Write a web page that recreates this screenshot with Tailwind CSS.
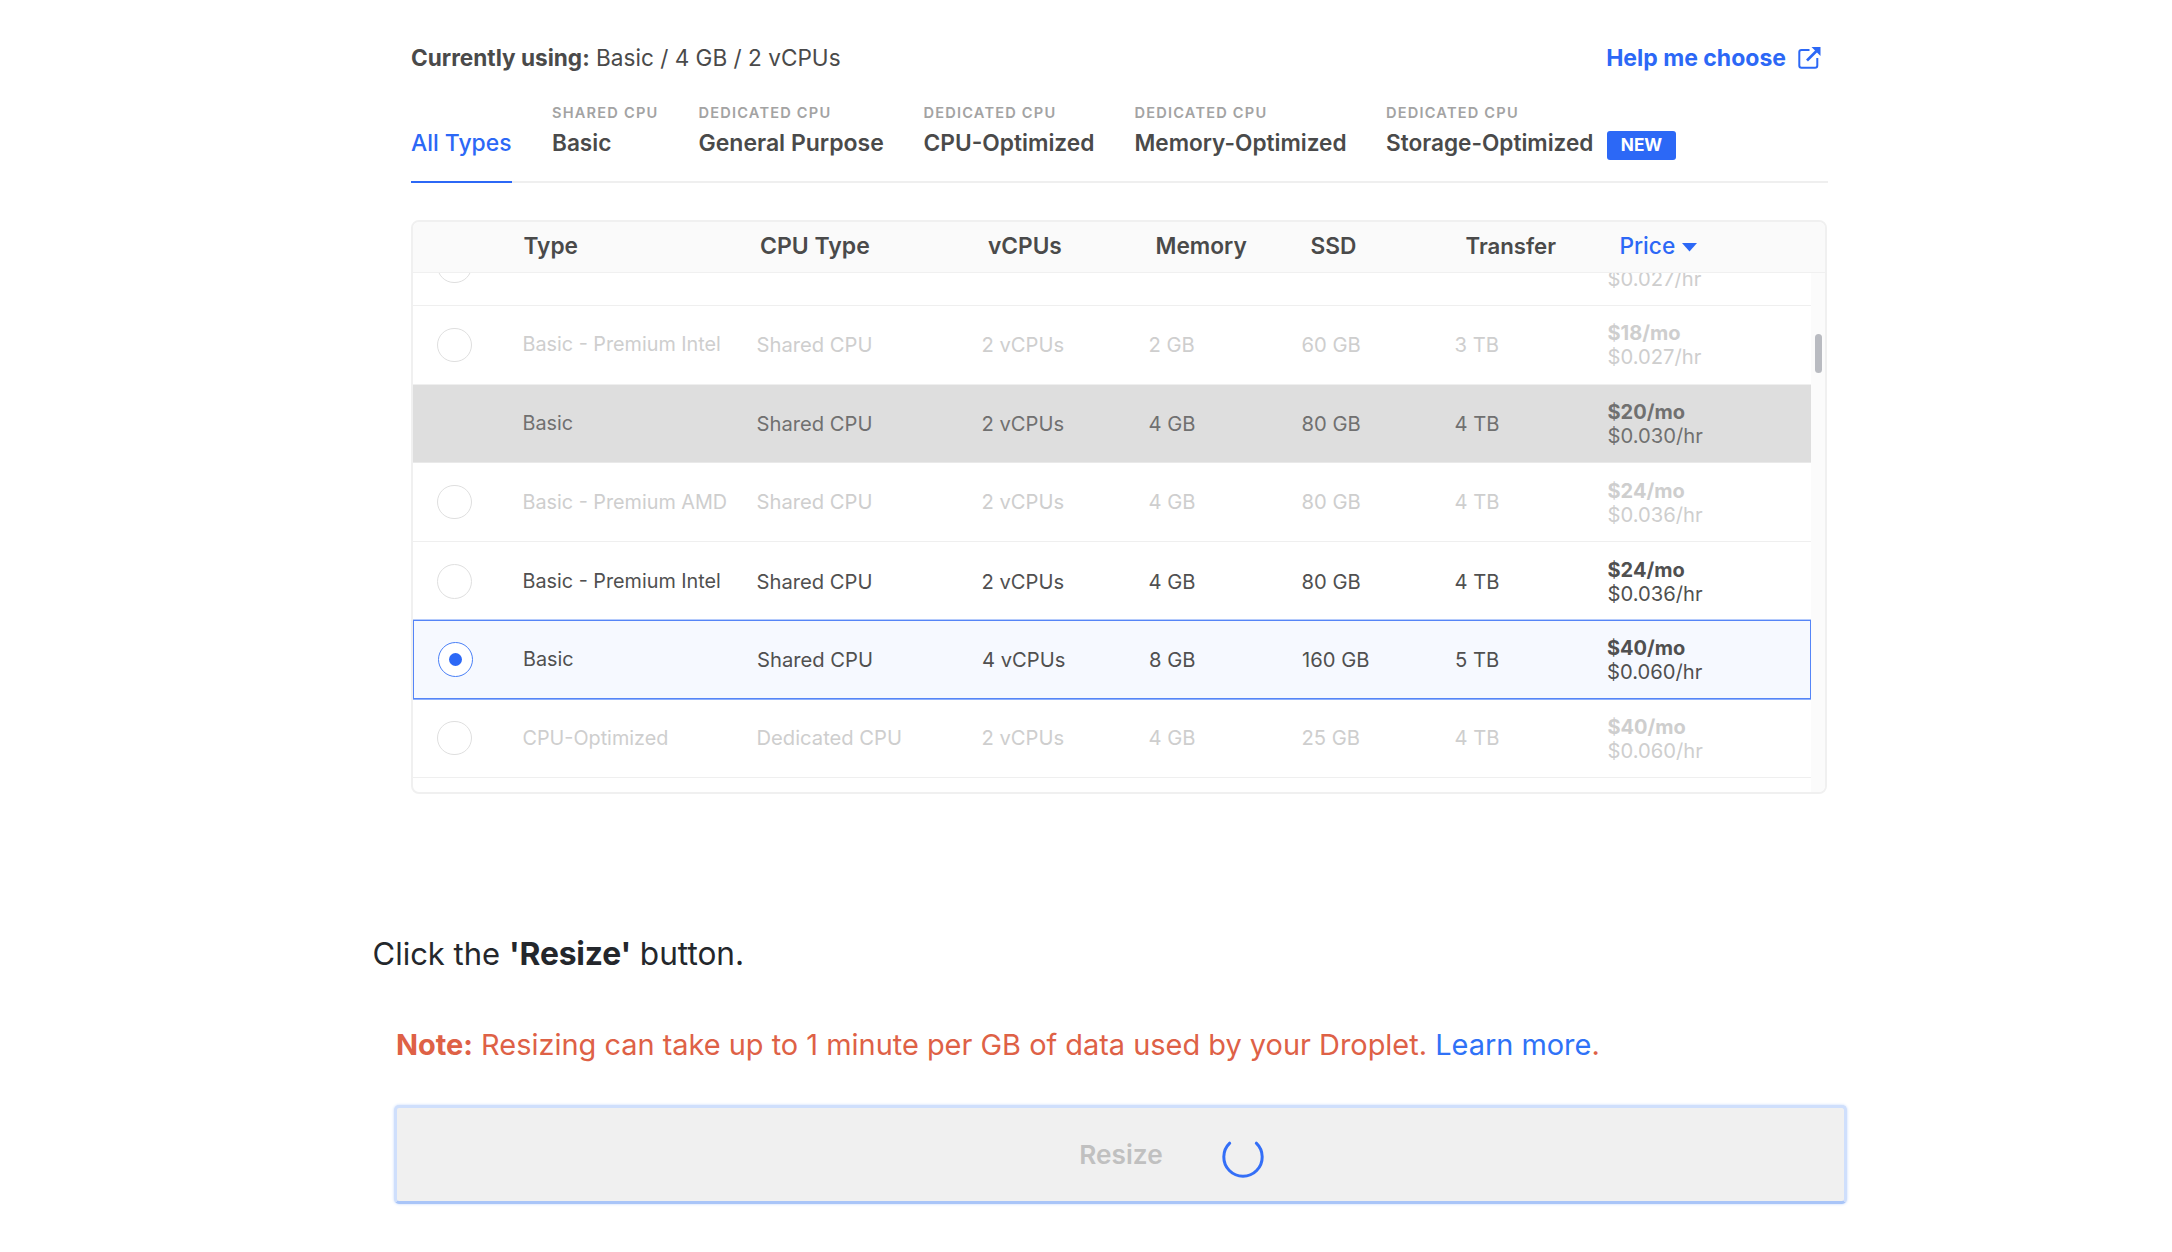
<!DOCTYPE html>
<html lang="en">
<head>
<meta charset="utf-8">
<title>Resize Droplet</title>
<script src="https://cdn.jsdelivr.net/npm/@tailwindcss/browser@4"></script>
</head>
<body class="bg-white font-['Inter',sans-serif] text-[#4a4a4a] w-[2172px] h-[1252px] overflow-hidden">
<section class="ml-[411px] w-[1417px] pt-[42px]">
  <div class="flex h-8 items-center justify-between whitespace-nowrap leading-8">
    <p class="text-[22.600px]"><b class="text-[22.600px] font-bold">Currently using:</b> Basic / 4 GB / 2 vCPUs</p>
    <a class="flex items-center pr-[7px] text-[23px] font-bold text-[#2c68f6]">Help me choose
      <svg class="-mt-px ml-3 size-[23px]" viewBox="0 0 23 23" fill="none" stroke="#2c68f6" stroke-width="2"><path d="M11.5 4H3.500Q1.300 4 1.300 6V19.500Q1.300 21.700 3.500 21.700H17Q19.300 21.700 19.300 19.500V12" /><path d="M9 14.500 18.500 5" stroke-width="2.700"/><path d="M13.500 1H22.500V10Z" fill="#2c68f6" stroke="none"/></svg>
    </a>
  </div>
  <nav class="flex h-[109px] whitespace-nowrap border-b-2 border-[#efefef] pt-[29px] text-[22.600px] font-semibold leading-[30px]">
    <div class="w-[141px]"><div class="-mb-[2px] h-[80px] w-[101px] border-b-2 border-[#2c68f6] pt-[25px] text-[22.900px] font-medium text-[#2c68f6]">All Types</div></div>
    <div class="w-[146.500px]"><div class="mb-[5px] h-5 text-[14.600px] leading-5 tracking-[1.200px] text-[#a3a3a3]">SHARED CPU</div>Basic</div>
    <div class="w-[225px]"><div class="mb-[5px] h-5 text-[14.600px] leading-5 tracking-[1.200px] text-[#a3a3a3]">DEDICATED CPU</div><span class="text-[23px]">General Purpose</span></div>
    <div class="w-[211px]"><div class="mb-[5px] h-5 text-[14.600px] leading-5 tracking-[1.200px] text-[#a3a3a3]">DEDICATED CPU</div><span class="text-[22.750px]">CPU-Optimized</span></div>
    <div class="w-[251.500px]"><div class="mb-[5px] h-5 text-[14.600px] leading-5 tracking-[1.200px] text-[#a3a3a3]">DEDICATED CPU</div>Memory-Optimized</div>
    <div class="w-[221px]"><div class="mb-[5px] h-5 text-[14.600px] leading-5 tracking-[1.200px] text-[#a3a3a3]">DEDICATED CPU</div>Storage-Optimized</div>
    <span class="mt-[28px] h-[29px] w-[69px] rounded-[3px] bg-[#2c68f6] text-center text-[17.200px] font-bold leading-[27px] text-white">NEW</span>
  </nav>

  <div class="mt-[37px] h-[574px] w-[1416px] overflow-hidden rounded-[8px] border-2 border-[#f0f0f0]">
    <div class="grid h-[51px] grid-cols-[110.500px_236.500px_228px_167.500px_155px_155px_154px_auto] items-center whitespace-nowrap border-b border-[#f0f0f0] bg-[#fafafa] pb-[1.500px] text-[22.700px] font-semibold">
      <span></span><span>Type</span><span class="text-[23px]">CPU Type</span><span>vCPUs</span><span>Memory</span><span>SSD</span><span class="-mt-px text-[22.200px]">Transfer</span>
      <span class="flex items-center text-[#2c68f6] font-medium">Price<svg class="ml-[7px] mt-[3px] h-[9px] w-[15px]" viewBox="0 0 15 9"><path d="M0 0H15L7.500 8.500Z" fill="#2c68f6"/></svg></span>
    </div>
    <div class="flex h-[519px] overflow-hidden">
      <div id="rows" class="-mt-[45.670px] w-[1398px] text-[20.200px]"></div>
      <div class="relative flex-1 bg-[#fbfbfb]"><div class="absolute left-[4px] top-[61px] h-[39px] w-[7px] rounded-full bg-[#b9bbc1]"></div></div>
    </div>
  </div>
</section>

<p class="ml-[372.500px] mt-[142px] h-9 whitespace-nowrap text-[31.200px] leading-9 text-[#24272c]"><span class="text-[31px]">Click the</span> <b class="text-[31.800px] tracking-[-0.150px]">'Resize'</b> <span class="text-[31.600px]">button.</span></p>
<p class="ml-[396px] mt-[53px] h-10 whitespace-nowrap text-[28.930px] leading-10 text-[#de6146]"><b>Note:</b> Resizing can take up to 1 minute per GB of data used by your Droplet. <a class="text-[#2f72f7]">Learn more</a>.</p>
<button class="relative ml-[394px] mt-[40px] block h-[99px] w-[1453px] rounded-[5px] border-[3px] border-[#cfdffc] border-b-[#a9c5f8] bg-[#f0f0f0] text-[26.200px] font-semibold text-[#c0c0c0] shadow-[0_0_3px_#c4d8fb]">
  <span class="block pl-px">Resize</span>
  <svg class="absolute left-[823.500px] top-[25.500px] size-[44px]" viewBox="0 0 44 44" fill="none"><path d="M8.700 9.200A19.200 19.200 0 1 0 35.300 9.200" stroke="#346ff7" stroke-width="3" stroke-linecap="round"/></svg>
</button>

<script>
const plans = [
  ['', '', '', '', '', '', '', '$0.027', 'off'],
  ['Basic - Premium Intel', 'Shared CPU', '2 vCPUs', '2 GB', '60 GB', '3 TB', '$18', '$0.027', 'off'],
  ['Basic', 'Shared CPU', '2 vCPUs', '4 GB', '80 GB', '4 TB', '$20', '$0.030', 'current'],
  ['Basic - Premium AMD', 'Shared CPU', '2 vCPUs', '4 GB', '80 GB', '4 TB', '$24', '$0.036', 'off'],
  ['Basic - Premium Intel', 'Shared CPU', '2 vCPUs', '4 GB', '80 GB', '4 TB', '$24', '$0.036', 'on'],
  ['Basic', 'Shared CPU', '4 vCPUs', '8 GB', '160 GB', '5 TB', '$40', '$0.060', 'selected'],
  ['CPU-Optimized', 'Dedicated CPU', '2 vCPUs', '4 GB', '25 GB', '4 TB', '$40', '$0.060', 'off'],
  ['', '', '', '', '', '', '', '', 'blank'],
];
const tone = {
  off: 'border-b border-[#efefef] text-[#cecece]',
  current: 'border-b border-[#e9e9e9] bg-[#dedede] text-[#707070]',
  on: 'text-[#505050]',
  selected: '-mt-px border border-[#5585f7] bg-[#f6f9ff] text-[#505050] shadow-[0_-1px_0_#b5cbfc,0_1px_0_#8fb0fa]',
  blank: '',
};
const ring = '<span class="ml-[24px] size-[34.500px] rounded-full border border-[#dfdfdf] bg-white"></span>';
const picked = '<span class="ml-[23.500px] flex size-[35px] items-center justify-center rounded-full border-[1.500px] border-[#4a80f7] bg-white"><span class="size-[13px] rounded-full bg-[#2c68f6]"></span></span>';
document.getElementById('rows').innerHTML = plans.map(p => {
  const s = p[8];
  const mark = s === 'selected' ? picked : s === 'current' || s === 'blank' ? '<span></span>' : ring;
  const price = s === 'blank' ? '' : `<span class="pt-px leading-[24px]"><b class="block text-[20px]">${p[6] ? p[6] + '/mo' : '&nbsp;'}</b>${p[7]}/hr</span>`;
  const size = s === 'selected' ? 'h-[79.670px] grid-cols-[109px_234px_225px_167px_153px_153px_152px_auto]' : 'h-[78.670px] grid-cols-[109.500px_234px_225px_167px_153px_153px_153px_auto]';
  return `<div class="grid ${size} items-center whitespace-nowrap ${tone[s]}">${mark}<span class="pt-px text-[19.800px]">${p[0]}</span>${p.slice(1, 6).map(t => `<span class="pt-px">${t}</span>`).join('')}${price}</div>`;
}).join('');
</script>
</body>
</html>
